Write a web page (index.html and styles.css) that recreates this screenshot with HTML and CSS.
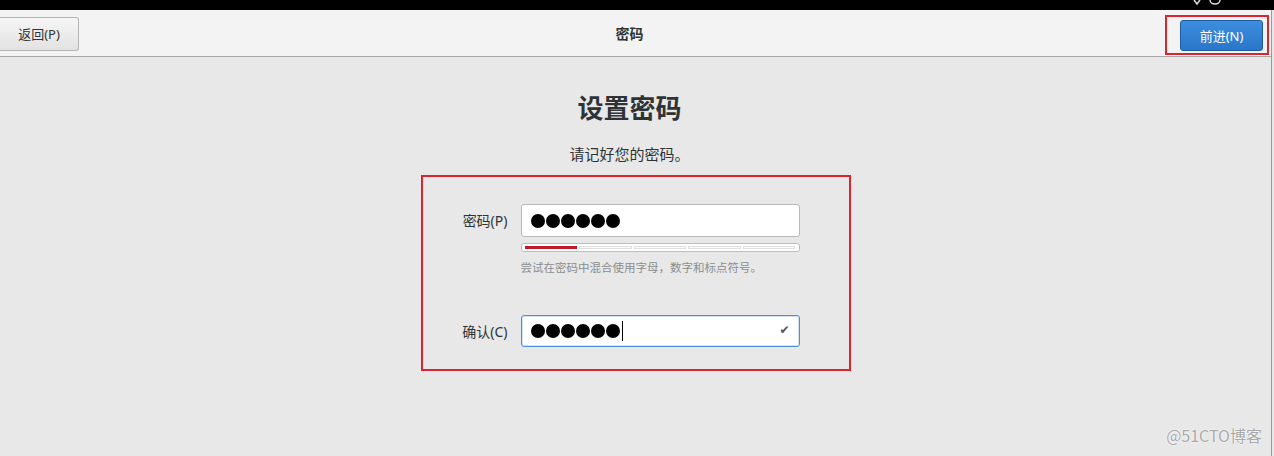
FILE: index.html
```html
<!DOCTYPE html>
<html lang="zh-CN">
<head>
  <meta charset="UTF-8">
  <title>密码</title>
  <link rel="stylesheet" href="styles.css">
</head>
<body>
  <div class="topbar">
    <svg class="tray" width="40" height="10" viewBox="0 0 40 10">
      <path d="M6 0 L9 4 L12 0" fill="none" stroke="#ddd" stroke-width="1.5"/>
      <path d="M22 0 A5 4 0 0 0 32 0" fill="none" stroke="#ddd" stroke-width="1.5"/>
    </svg>
  </div>
  <div class="window">
    <div class="header">
      <button type="button" class="btn btn-back">返回(P)</button>
      <div class="header-title">密码</div>
      <div class="mark">
        <button type="button" class="btn btn-next">前进(N)</button>
      </div>
    </div>
    <div class="content">
      <h1 class="heading">设置密码</h1>
      <p class="subtitle">请记好您的密码。</p>
      <div class="form-box">
        <div class="row">
          <label class="label">密码(P)</label>
          <div class="field">
            <div class="entry">
              <span class="dot"></span><span class="dot"></span><span class="dot"></span><span class="dot"></span><span class="dot"></span><span class="dot"></span>
            </div>
            <div class="strength">
              <span class="seg seg-on"></span><span class="seg"></span><span class="seg"></span><span class="seg"></span><span class="seg"></span>
            </div>
            <div class="hint">尝试在密码中混合使用字母，数字和标点符号。</div>
          </div>
        </div>
        <div class="row row-confirm">
          <label class="label">确认(C)</label>
          <div class="field">
            <div class="entry entry-focus">
              <span class="dot"></span><span class="dot"></span><span class="dot"></span><span class="dot"></span><span class="dot"></span><span class="dot"></span><span class="caret"></span>
              <span class="check">✔</span>
            </div>
          </div>
        </div>
      </div>
    </div>
    <div class="watermark">@51CTO博客</div>
  </div>
</body>
</html>
```

FILE: styles.css
```css
* {
  margin: 0;
  padding: 0;
  box-sizing: border-box;
}

body {
  width: 1274px;
  height: 456px;
  overflow: hidden;
  background-color: #e8e8e8;
  font-family: "Noto Sans", "Noto Sans CJK SC", sans-serif;
  color: #2e3436;
}

.topbar {
  height: 10px;
  background-color: #000;
  position: relative;
}
.tray {
  position: absolute;
  left: 1188px;
  top: 0;
}

.window {
  height: 446px;
  width: 1272px;
  border-right: 1px solid #9a9a9a;
  position: relative;
}

.header {
  height: 47px;
  background-color: #f3f3f3;
  border-bottom: 1px solid #a8a8a8;
  display: grid;
  grid-template-columns: 1fr auto 1fr;
  align-items: center;
  padding-right: 12px;
}
.header-title {
  font-size: 14px;
  font-weight: bold;
  color: #2e3436;
}

.btn {
  font-family: "Noto Sans", "Noto Sans CJK SC", sans-serif;
  font-size: 13px;
  border-radius: 3px;
  cursor: pointer;
}
.btn-back {
  width: 79px;
  height: 34px;
  margin-top: 1px;
  color: #2e3436;
  background: linear-gradient(#f6f6f6, #e2e2e2);
  border: 1px solid #b4b4b4;
  border-left: 0;
  border-radius: 0 3px 3px 0;
}
.mark {
  justify-self: end;
  margin-right: -10px;
  border: 2px solid #dc2430;
  width: 104px;
  height: 40px;
  padding: 3px 4px 2px 13px;
  margin-top: 3px;
}
.btn-next {
  width: 83px;
  height: 31px;
  color: #fff;
  background: linear-gradient(#3d8ee0, #2a76c9);
  border: 1px solid #1d5da6;
}

.content {
  display: flex;
  flex-direction: column;
  align-items: center;
  padding-right: 12px;
}
.heading {
  font-size: 26px;
  font-weight: bold;
  color: #2e3436;
  margin-top: 33px;
  line-height: 36px;
}
.subtitle {
  font-size: 15px;
  margin-top: 17px;
  line-height: 22px;
}

.form-box {
  width: 430px;
  height: 196px;
  border: 2px solid #da2530;
  margin-top: 10px;
  margin-left: 12px;
  padding: 27px 0 0 0;
}
.row {
  display: flex;
  align-items: flex-start;
}
.row-confirm {
  margin-top: 39px;
}
.label {
  width: 85px;
  text-align: right;
  font-size: 14px;
  color: #2e3436;
  line-height: 33px;
  margin-right: 13px;
}
.field {
  width: 279px;
}
.entry {
  height: 33px;
  background-color: #fff;
  border: 1px solid #b9b9b9;
  border-radius: 3px;
  display: flex;
  align-items: center;
  padding-left: 9px;
  position: relative;
}
.entry-focus {
  height: 32px;
  border-color: #4a90d9;
  box-shadow: inset 0 0 0 1px rgba(74, 144, 217, 0.25);
}
.dot {
  width: 14px;
  height: 14px;
  border-radius: 50%;
  background-color: #000;
  margin-right: 1px;
}
.caret {
  width: 1px;
  height: 20px;
  background-color: #000;
  margin-left: 1px;
}
.check {
  position: absolute;
  right: 9px;
  top: 7px;
  font-size: 12px;
  color: #555;
  font-family: "DejaVu Sans", sans-serif;
}

.strength {
  height: 9px;
  margin-top: 6px;
  background-color: #fff;
  border: 1px solid #bdbdbd;
  border-radius: 3px;
  display: flex;
  gap: 2px;
  padding: 2px 3px;
}
.seg {
  flex: 1;
  height: 3px;
  background-color: #fbfbfb;
  border: 1px solid #e0e0e0;
}
.seg-on {
  background-color: #c01c28;
  border-color: #c01c28;
}
.hint {
  font-size: 11.5px;
  color: #8b8e8f;
  margin-top: 8px;
  line-height: 16px;
}

.watermark {
  position: absolute;
  right: 9px;
  bottom: 9px;
  font-size: 16px;
  color: #a8a8a8;
  text-shadow: 0 0 2px #fff, 0 0 1px #fff;
  font-family: "Noto Sans CJK SC", sans-serif;
}
```
